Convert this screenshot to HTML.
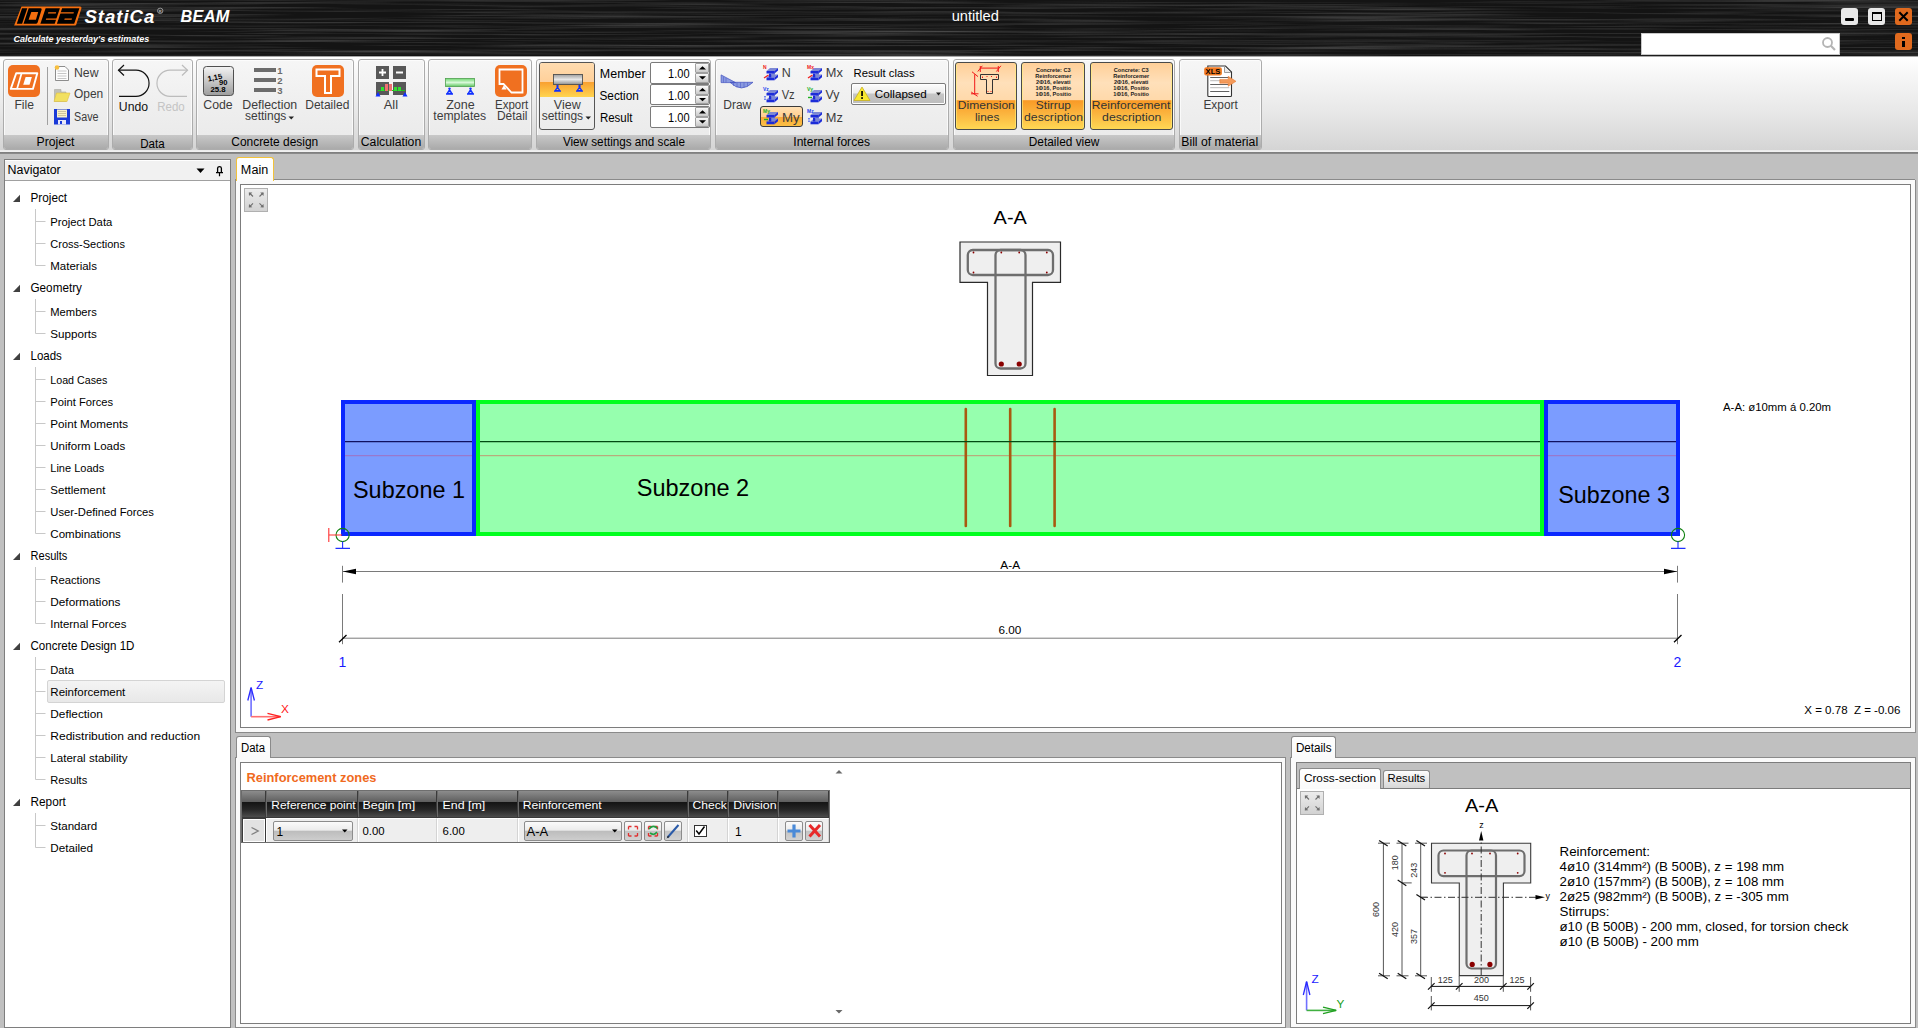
<!DOCTYPE html>
<html><head><meta charset="utf-8">
<style>
*{box-sizing:border-box;margin:0;padding:0}
html,body{width:1918px;height:1028px;overflow:hidden;background:#c0c0c0;font-family:"Liberation Sans",sans-serif;color:#000;position:relative}
.a{position:absolute}
svg{position:absolute;left:0;top:0;overflow:visible}
svg text{font-family:"Liberation Sans",sans-serif}
</style></head><body>
<div class="a" style="left:0px;top:0px;width:1918px;height:56px;background:#161616"></div>
<svg width="1918" height="56" style="position:absolute;left:0;top:0"><defs><filter id="brush" x="0" y="0" width="100%" height="100%"><feTurbulence type="fractalNoise" baseFrequency="0.004 0.42" numOctaves="3" seed="7"/><feColorMatrix type="matrix" values="0 0 0 0 1  0 0 0 0 1  0 0 0 0 1  0.9 0 0 0 -0.38"/></filter></defs><rect width="1918" height="56" fill="#141414"/><rect width="1918" height="56" filter="url(#brush)" opacity="0.5"/></svg>
<div class="a" style="left:1841px;top:8px;width:17px;height:17px;background:#e8e8e8;border-radius:3px"></div>
<div class="a" style="left:1845px;top:18px;width:9px;height:3px;background:#000;border-radius:1px"></div>
<div class="a" style="left:1868px;top:8px;width:17px;height:17px;background:#e8e8e8;border-radius:3px"></div>
<div class="a" style="left:1872px;top:12px;width:9.5px;height:9px;border:1.6px solid #000;border-top-width:2.6px"></div>
<div class="a" style="left:1895px;top:8px;width:17px;height:17px;background:#e06a1e;border-radius:3px"></div>
<div class="a" style="left:1641px;top:33px;width:199px;height:22px;background:#fff;border:1px solid #c8c8c8"></div>
<div class="a" style="left:1895px;top:33px;width:17px;height:17px;background:#e06a1e;border-radius:3px"></div>
<div class="a" style="left:1902px;top:37px;width:3px;height:2px;background:#000"></div>
<div class="a" style="left:1902px;top:40.5px;width:3px;height:6px;background:#000"></div>
<div class="a" style="left:0px;top:56px;width:1918px;height:97.5px;background:linear-gradient(180deg,#a8a8a8 0px,#a8a8a8 1px,#ffffff 1px,#f8f8f8 15px,#e6e6e6 60px,#d4d4d4 94.5px,#ececec 94.5px,#f2f2f2 96px,#7a7a7a 96px,#8a8a8a 97.5px)"></div>
<div class="a" style="left:2.5px;top:59px;width:106.0px;height:91px;border:1px solid #acacac;border-radius:3px;background:linear-gradient(180deg,#f6f6f6 0%,#f0f0f0 40%,#e9e9e9 100%);box-shadow:inset 0 0 0 1px rgba(255,255,255,.7)"></div>
<div class="a" style="left:3.5px;top:135px;width:104.0px;height:14px;background:linear-gradient(180deg,#c8c8c8,#aaaaaa);border-radius:0 0 2px 2px"></div>
<div class="a" style="left:112px;top:59px;width:81px;height:91px;border:1px solid #acacac;border-radius:3px;background:linear-gradient(180deg,#f6f6f6 0%,#f0f0f0 40%,#e9e9e9 100%);box-shadow:inset 0 0 0 1px rgba(255,255,255,.7)"></div>
<div class="a" style="left:113px;top:135px;width:79px;height:14px;background:linear-gradient(180deg,#c8c8c8,#aaaaaa);border-radius:0 0 2px 2px"></div>
<div class="a" style="left:196px;top:59px;width:157.5px;height:91px;border:1px solid #acacac;border-radius:3px;background:linear-gradient(180deg,#f6f6f6 0%,#f0f0f0 40%,#e9e9e9 100%);box-shadow:inset 0 0 0 1px rgba(255,255,255,.7)"></div>
<div class="a" style="left:197px;top:135px;width:155.5px;height:14px;background:linear-gradient(180deg,#c8c8c8,#aaaaaa);border-radius:0 0 2px 2px"></div>
<div class="a" style="left:357.5px;top:59px;width:67.0px;height:91px;border:1px solid #acacac;border-radius:3px;background:linear-gradient(180deg,#f6f6f6 0%,#f0f0f0 40%,#e9e9e9 100%);box-shadow:inset 0 0 0 1px rgba(255,255,255,.7)"></div>
<div class="a" style="left:358.5px;top:135px;width:65.0px;height:14px;background:linear-gradient(180deg,#c8c8c8,#aaaaaa);border-radius:0 0 2px 2px"></div>
<div class="a" style="left:428px;top:59px;width:104px;height:91px;border:1px solid #acacac;border-radius:3px;background:linear-gradient(180deg,#f6f6f6 0%,#f0f0f0 40%,#e9e9e9 100%);box-shadow:inset 0 0 0 1px rgba(255,255,255,.7)"></div>
<div class="a" style="left:429px;top:135px;width:102px;height:14px;background:linear-gradient(180deg,#c8c8c8,#aaaaaa);border-radius:0 0 2px 2px"></div>
<div class="a" style="left:536px;top:59px;width:175px;height:91px;border:1px solid #acacac;border-radius:3px;background:linear-gradient(180deg,#f6f6f6 0%,#f0f0f0 40%,#e9e9e9 100%);box-shadow:inset 0 0 0 1px rgba(255,255,255,.7)"></div>
<div class="a" style="left:537px;top:135px;width:173px;height:14px;background:linear-gradient(180deg,#c8c8c8,#aaaaaa);border-radius:0 0 2px 2px"></div>
<div class="a" style="left:715px;top:59px;width:233.5px;height:91px;border:1px solid #acacac;border-radius:3px;background:linear-gradient(180deg,#f6f6f6 0%,#f0f0f0 40%,#e9e9e9 100%);box-shadow:inset 0 0 0 1px rgba(255,255,255,.7)"></div>
<div class="a" style="left:716px;top:135px;width:231.5px;height:14px;background:linear-gradient(180deg,#c8c8c8,#aaaaaa);border-radius:0 0 2px 2px"></div>
<div class="a" style="left:952.5px;top:59px;width:222.5px;height:91px;border:1px solid #acacac;border-radius:3px;background:linear-gradient(180deg,#f6f6f6 0%,#f0f0f0 40%,#e9e9e9 100%);box-shadow:inset 0 0 0 1px rgba(255,255,255,.7)"></div>
<div class="a" style="left:953.5px;top:135px;width:220.5px;height:14px;background:linear-gradient(180deg,#c8c8c8,#aaaaaa);border-radius:0 0 2px 2px"></div>
<div class="a" style="left:1178.5px;top:59px;width:83.5px;height:91px;border:1px solid #acacac;border-radius:3px;background:linear-gradient(180deg,#f6f6f6 0%,#f0f0f0 40%,#e9e9e9 100%);box-shadow:inset 0 0 0 1px rgba(255,255,255,.7)"></div>
<div class="a" style="left:1179.5px;top:135px;width:81.5px;height:14px;background:linear-gradient(180deg,#c8c8c8,#aaaaaa);border-radius:0 0 2px 2px"></div>
<div class="a" style="left:47px;top:67px;width:1px;height:58px;background:#a0a0a0"></div>
<div class="a" style="left:539px;top:62.3px;width:56px;height:68px;border:1px solid #555;border-radius:3px;background:linear-gradient(180deg,#f4f4f4,#ececec)"></div>
<div class="a" style="left:540px;top:63.3px;width:54px;height:34px;background:linear-gradient(180deg,#ffdcb0 0%,#ffd09a 55%,#f9a030 56%,#ffd450 100%);border-radius:2px 2px 0 0"></div>
<div class="a" style="left:650.3px;top:62.4px;width:59.5px;height:21.2px;background:#fff;border:1px solid #7a7a7a;border-radius:2px"></div>
<div class="a" style="left:695.3px;top:63.4px;width:13.5px;height:9.6px;background:linear-gradient(180deg,#fafafa,#c8c8c8);border:1px solid #a0a0a0;border-radius:1px"></div>
<div class="a" style="left:695.3px;top:73.0px;width:13.5px;height:9.6px;background:linear-gradient(180deg,#fafafa,#c8c8c8);border:1px solid #a0a0a0;border-radius:1px"></div>
<div class="a" style="left:650.3px;top:84.2px;width:59.5px;height:21.2px;background:#fff;border:1px solid #7a7a7a;border-radius:2px"></div>
<div class="a" style="left:695.3px;top:85.2px;width:13.5px;height:9.6px;background:linear-gradient(180deg,#fafafa,#c8c8c8);border:1px solid #a0a0a0;border-radius:1px"></div>
<div class="a" style="left:695.3px;top:94.8px;width:13.5px;height:9.6px;background:linear-gradient(180deg,#fafafa,#c8c8c8);border:1px solid #a0a0a0;border-radius:1px"></div>
<div class="a" style="left:650.3px;top:106.4px;width:59.5px;height:21.2px;background:#fff;border:1px solid #7a7a7a;border-radius:2px"></div>
<div class="a" style="left:695.3px;top:107.4px;width:13.5px;height:9.6px;background:linear-gradient(180deg,#fafafa,#c8c8c8);border:1px solid #a0a0a0;border-radius:1px"></div>
<div class="a" style="left:695.3px;top:117.0px;width:13.5px;height:9.6px;background:linear-gradient(180deg,#fafafa,#c8c8c8);border:1px solid #a0a0a0;border-radius:1px"></div>
<div class="a" style="left:759.5px;top:106.2px;width:43px;height:21.3px;border:1px solid #3a3a3a;border-radius:3px;background:linear-gradient(180deg,#ffe0b4 0%,#ffcf90 50%,#f9a838 51%,#fbc045 100%)"></div>
<div class="a" style="left:850.5px;top:83px;width:95px;height:21.6px;border:1px solid #7a7a7a;border-radius:2px;box-shadow:inset 0 0 0 1px #fff;background:linear-gradient(180deg,#fdfdfd 0%,#ececec 45%,#c6c6c6 50%,#bcbcbc 100%)"></div>
<div class="a" style="left:955.2px;top:62.3px;width:62.299999999999955px;height:68px;border:1px solid #4a4a4a;border-radius:3px;box-shadow:inset 1px 0 0 rgba(255,240,120,.6),inset -1px 0 0 rgba(255,240,120,.6);background:linear-gradient(180deg,#ffcf98 0%,#ffe0ba 30%,#ffd9aa 56%,#f99a26 57%,#fbb640 78%,#ffd854 100%)"></div>
<div class="a" style="left:1021.3px;top:62.3px;width:64.0px;height:68px;border:1px solid #4a4a4a;border-radius:3px;box-shadow:inset 1px 0 0 rgba(255,240,120,.6),inset -1px 0 0 rgba(255,240,120,.6);background:linear-gradient(180deg,#ffcf98 0%,#ffe0ba 30%,#ffd9aa 56%,#f99a26 57%,#fbb640 78%,#ffd854 100%)"></div>
<div class="a" style="left:1089.5px;top:62.3px;width:83.29999999999995px;height:68px;border:1px solid #4a4a4a;border-radius:3px;box-shadow:inset 1px 0 0 rgba(255,240,120,.6),inset -1px 0 0 rgba(255,240,120,.6);background:linear-gradient(180deg,#ffcf98 0%,#ffe0ba 30%,#ffd9aa 56%,#f99a26 57%,#fbb640 78%,#ffd854 100%)"></div>
<div class="a" style="left:4px;top:159px;width:227px;height:869px;background:#fff;border:1px solid #7e7e7e"></div>
<div class="a" style="left:5px;top:160px;width:225px;height:20.5px;background:#f1f1f1;border-bottom:1px solid #a0a0a0;box-shadow:inset 0 1px 0 #fff"></div>
<div class="a" style="left:46.5px;top:679.5px;width:178.5px;height:23px;background:linear-gradient(180deg,#f4f4f4,#e8e8e8);border:1px solid #d4d4d4;border-radius:2px"></div>
<div class="a" style="left:235px;top:179px;width:1680px;height:1px;background:#8a8a8a"></div>
<div class="a" style="left:235px;top:180px;width:1681px;height:553px;background:#fafafa;border:1px solid #8a8a8a;border-top:none"></div>
<div class="a" style="left:235.5px;top:157px;width:38.5px;height:23.5px;background:linear-gradient(180deg,#ffffff,#fbfbfb);border:1px solid #f2c23a;border-bottom:none;border-radius:3px 3px 0 0"></div>
<div class="a" style="left:240px;top:184px;width:1671px;height:544px;background:#fff;border:1px solid #7c7c7c"></div>
<div class="a" style="left:244px;top:188px;width:24px;height:24px;background:linear-gradient(180deg,#ececec,#d2d2d2);border:1px solid #b0b0b0"></div>
<div class="a" style="left:235px;top:757px;width:1051px;height:271px;background:#fafafa;border:1px solid #8a8a8a;border-top:none"></div>
<div class="a" style="left:235px;top:757px;width:1051px;height:1px;background:#8a8a8a"></div>
<div class="a" style="left:236px;top:735.8px;width:34.5px;height:22.5px;background:linear-gradient(180deg,#ffffff,#fafafa);border:1px solid #8a8a8a;border-bottom:none;border-radius:3px 3px 0 0"></div>
<div class="a" style="left:240px;top:762px;width:1041.5px;height:261.5px;background:#fff;border:1px solid #7c7c7c"></div>
<div class="a" style="left:241px;top:790px;width:588.5px;height:53px;background:#3a3a3a;border:1px solid #6e6e6e"></div>
<div class="a" style="left:241px;top:791px;width:25px;height:26px;background:linear-gradient(180deg,#8c8c8c 0%,#5e5e5e 42%,#141414 43%,#252525 70%,#4c4c4c 100%);border-left:1px solid #6a6a6a;border-right:1px solid #3a3a3a"></div>
<div class="a" style="left:266px;top:791px;width:92px;height:26px;background:linear-gradient(180deg,#8c8c8c 0%,#5e5e5e 42%,#141414 43%,#252525 70%,#4c4c4c 100%);border-left:1px solid #6a6a6a;border-right:1px solid #3a3a3a"></div>
<div class="a" style="left:358px;top:791px;width:79px;height:26px;background:linear-gradient(180deg,#8c8c8c 0%,#5e5e5e 42%,#141414 43%,#252525 70%,#4c4c4c 100%);border-left:1px solid #6a6a6a;border-right:1px solid #3a3a3a"></div>
<div class="a" style="left:437px;top:791px;width:81px;height:26px;background:linear-gradient(180deg,#8c8c8c 0%,#5e5e5e 42%,#141414 43%,#252525 70%,#4c4c4c 100%);border-left:1px solid #6a6a6a;border-right:1px solid #3a3a3a"></div>
<div class="a" style="left:518px;top:791px;width:170px;height:26px;background:linear-gradient(180deg,#8c8c8c 0%,#5e5e5e 42%,#141414 43%,#252525 70%,#4c4c4c 100%);border-left:1px solid #6a6a6a;border-right:1px solid #3a3a3a"></div>
<div class="a" style="left:688px;top:791px;width:40px;height:26px;background:linear-gradient(180deg,#8c8c8c 0%,#5e5e5e 42%,#141414 43%,#252525 70%,#4c4c4c 100%);border-left:1px solid #6a6a6a;border-right:1px solid #3a3a3a"></div>
<div class="a" style="left:728px;top:791px;width:50px;height:26px;background:linear-gradient(180deg,#8c8c8c 0%,#5e5e5e 42%,#141414 43%,#252525 70%,#4c4c4c 100%);border-left:1px solid #6a6a6a;border-right:1px solid #3a3a3a"></div>
<div class="a" style="left:778px;top:791px;width:51px;height:26px;background:linear-gradient(180deg,#8c8c8c 0%,#5e5e5e 42%,#141414 43%,#252525 70%,#4c4c4c 100%);border-left:1px solid #6a6a6a;border-right:1px solid #3a3a3a"></div>
<div class="a" style="left:242px;top:817px;width:586px;height:1px;background:#3a3a3a"></div>
<div class="a" style="left:243px;top:818.5px;width:22px;height:23px;background:#e2e2e2;border:1px solid #fff"></div>
<div class="a" style="left:266px;top:818px;width:92px;height:24px;background:#eeeeee;border-left:1px solid #fff;border-right:1px solid #d4d4d4;border-top:1px solid #fff"></div>
<div class="a" style="left:358px;top:818px;width:79px;height:24px;background:#eeeeee;border-left:1px solid #fff;border-right:1px solid #d4d4d4;border-top:1px solid #fff"></div>
<div class="a" style="left:437px;top:818px;width:81px;height:24px;background:#eeeeee;border-left:1px solid #fff;border-right:1px solid #d4d4d4;border-top:1px solid #fff"></div>
<div class="a" style="left:518px;top:818px;width:170px;height:24px;background:#eeeeee;border-left:1px solid #fff;border-right:1px solid #d4d4d4;border-top:1px solid #fff"></div>
<div class="a" style="left:688px;top:818px;width:40px;height:24px;background:#eeeeee;border-left:1px solid #fff;border-right:1px solid #d4d4d4;border-top:1px solid #fff"></div>
<div class="a" style="left:728px;top:818px;width:50px;height:24px;background:#eeeeee;border-left:1px solid #fff;border-right:1px solid #d4d4d4;border-top:1px solid #fff"></div>
<div class="a" style="left:778px;top:818px;width:51px;height:24px;background:#eeeeee;border-left:1px solid #fff;border-right:1px solid #d4d4d4;border-top:1px solid #fff"></div>
<div class="a" style="left:272.5px;top:820.5px;width:80px;height:20.5px;background:linear-gradient(180deg,#fbfbfb 0%,#ececec 45%,#bdbdbd 52%,#cdcdcd 100%);border:1px solid #8c8c8c;border-radius:2px"></div>
<div class="a" style="left:523.8px;top:820.8px;width:98.5px;height:20.2px;background:linear-gradient(180deg,#fbfbfb 0%,#ececec 45%,#bdbdbd 52%,#cdcdcd 100%);border:1px solid #8c8c8c;border-radius:2px"></div>
<div class="a" style="left:624px;top:820.8px;width:18.4px;height:20.2px;background:linear-gradient(180deg,#fbfbfb 0%,#ececec 45%,#c4c4c4 52%,#d2d2d2 100%);border:1px solid #8c8c8c;border-radius:2px"></div>
<div class="a" style="left:644px;top:820.8px;width:18.4px;height:20.2px;background:linear-gradient(180deg,#fbfbfb 0%,#ececec 45%,#c4c4c4 52%,#d2d2d2 100%);border:1px solid #8c8c8c;border-radius:2px"></div>
<div class="a" style="left:663.6px;top:820.8px;width:18.4px;height:20.2px;background:linear-gradient(180deg,#fbfbfb 0%,#ececec 45%,#c4c4c4 52%,#d2d2d2 100%);border:1px solid #8c8c8c;border-radius:2px"></div>
<div class="a" style="left:784.8px;top:820.8px;width:18.4px;height:20.2px;background:linear-gradient(180deg,#fbfbfb 0%,#ececec 45%,#c4c4c4 52%,#d2d2d2 100%);border:1px solid #8c8c8c;border-radius:2px"></div>
<div class="a" style="left:805px;top:820.8px;width:18.4px;height:20.2px;background:linear-gradient(180deg,#fbfbfb 0%,#ececec 45%,#c4c4c4 52%,#d2d2d2 100%);border:1px solid #8c8c8c;border-radius:2px"></div>
<div class="a" style="left:694px;top:824.6px;width:12.5px;height:12px;background:#fff;border:1px solid #333"></div>
<div class="a" style="left:1290px;top:757px;width:626px;height:271px;background:#fafafa;border:1px solid #8a8a8a;border-top:none"></div>
<div class="a" style="left:1290px;top:757px;width:626px;height:1px;background:#8a8a8a"></div>
<div class="a" style="left:1290.7px;top:735.8px;width:45.6px;height:22.5px;background:linear-gradient(180deg,#ffffff,#fafafa);border:1px solid #8a8a8a;border-bottom:none;border-radius:3px 3px 0 0"></div>
<div class="a" style="left:1295.5px;top:762px;width:615.5px;height:261.5px;background:#c0c0c0;border:1px solid #7c7c7c"></div>
<div class="a" style="left:1296.5px;top:787.5px;width:613.5px;height:235px;background:#fff;border-top:1px solid #7c7c7c"></div>
<div class="a" style="left:1298.7px;top:767.5px;width:82.6px;height:21px;background:linear-gradient(180deg,#ffffff,#fafafa);border:1px solid #8a8a8a;border-bottom:none;border-radius:3px 3px 0 0"></div>
<div class="a" style="left:1383px;top:769.8px;width:47px;height:17.8px;background:linear-gradient(180deg,#fdfdfd,#d6d6d6);border:1px solid #8a8a8a;border-bottom:none;border-radius:3px 3px 0 0"></div>
<div class="a" style="left:1300px;top:791.2px;width:24px;height:23.5px;background:linear-gradient(180deg,#ececec,#d2d2d2);border:1px solid #b0b0b0"></div>
<svg width="1918" height="1028" viewBox="0 0 1918 1028">
<path d="M21.5 6.5 H80 Q82 6.5 81.4 8.4 L76.3 24.6 Q76 25.6 75 25.6 H14.1 Z" fill="#f56f0f"/>
<path d="M22 8.3 H27.3 L22.1 23.8 H16.8 Z" fill="#000"/>
<path d="M28.7 8.3 H40.6 Q42.1 8.3 41.6 9.8 L37.6 22.4 Q37.2 23.8 35.8 23.8 H23.5 Z" fill="#000"/>
<path d="M45.6 8.3 H59.9 L54.7 23.8 H40.4 Z" fill="#000"/>
<path d="M62.1 8.3 H79.4 L74.2 23.8 H56.9 Z" fill="#000"/>
<path d="M31.3 12.1 H38.2 L35.9 19.8 H28.6 Z" fill="#f56f0f"/>
<path d="M48.3 12.3 H56.2 L55.8 13.6 H47.9 Z M46.2 18.5 H58.5 L58.1 19.8 H45.8 Z" fill="#f56f0f"/>
<path d="M60 12.3 H73.9 L73.5 13.6 H59.6 Z M64.7 18.5 H72 L71.6 19.8 H64.3 Z" fill="#f56f0f"/>
<text x="84.5" y="22.5" font-size="18.6" fill="#fff" font-weight="bold" font-style="italic" letter-spacing="0.95">StatiCa</text>
<circle cx="160.2" cy="10.8" r="2.7" fill="none" stroke="#b0b0b0" stroke-width="0.8"/>
<text x="160.2" y="12.6" font-size="4" fill="#b0b0b0" text-anchor="middle" font-weight="bold">R</text>
<text x="180.5" y="22" font-size="16.3" fill="#fff" font-weight="bold" font-style="italic" letter-spacing="0.3">BEAM</text>
<text x="13.5" y="41.5" font-size="9" fill="#fff" font-weight="bold" font-style="italic">Calculate yesterday's estimates</text>
<text x="951.66" y="21.0" font-size="14" fill="#fff" textLength="47.18" lengthAdjust="spacingAndGlyphs">untitled</text>
<path d="M1899.3 12.3 L1907.7 20.7 M1907.7 12.3 L1899.3 20.7" stroke="#000" stroke-width="2"/>
<circle cx="1827.5" cy="42.5" r="4.5" fill="none" stroke="#b4b4b4" stroke-width="1.8"/><path d="M1830.8 45.8 L1835 50" stroke="#b4b4b4" stroke-width="2.2"/>
<text x="55.55" y="146.0" font-size="12" fill="#000" text-anchor="middle" textLength="37.94" lengthAdjust="spacingAndGlyphs">Project</text>
<text x="152.50" y="147.5" font-size="12" fill="#000" text-anchor="middle" textLength="24.44" lengthAdjust="spacingAndGlyphs">Data</text>
<text x="274.75" y="146.0" font-size="12" fill="#000" text-anchor="middle" textLength="86.94" lengthAdjust="spacingAndGlyphs">Concrete design</text>
<text x="391.00" y="146.0" font-size="12" fill="#000" text-anchor="middle" textLength="60.44" lengthAdjust="spacingAndGlyphs">Calculation</text>
<text x="623.90" y="146.0" font-size="12" fill="#000" text-anchor="middle" textLength="122.04" lengthAdjust="spacingAndGlyphs">View settings and scale</text>
<text x="831.65" y="146.0" font-size="12" fill="#000" text-anchor="middle" textLength="76.74" lengthAdjust="spacingAndGlyphs">Internal forces</text>
<text x="1064.10" y="146.0" font-size="12" fill="#000" text-anchor="middle" textLength="70.64" lengthAdjust="spacingAndGlyphs">Detailed view</text>
<text x="1219.70" y="146.0" font-size="12" fill="#000" text-anchor="middle" textLength="76.84" lengthAdjust="spacingAndGlyphs">Bill of material</text>
<rect x="8" y="65" width="32" height="32" rx="5" fill="#f07020"/>
<path d="M16.2 73.2 H37.3 L32.9 88.9 H10.8 Z" fill="none" stroke="#fff" stroke-width="1.9" stroke-linejoin="round"/><path d="M21.6 73.2 L17 88.9" stroke="#fff" stroke-width="1.7"/><path d="M25.6 77 H31.9 L29.5 84.7 H23.2 Z" fill="#fff"/>
<text x="24.25" y="108.6" font-size="12" fill="#3c3c3c" text-anchor="middle" textLength="19.54" lengthAdjust="spacingAndGlyphs">File</text>
<path d="M55.5 66.5 L65 66.5 L68.5 70 L68.5 80.5 L55.5 80.5 Z" fill="#fdfdfd" stroke="#808080" stroke-width="0.9"/><path d="M57.5 71 H66.5 M57.5 73.5 H66.5 M57.5 76 H66.5 M57.5 78.5 H66.5" stroke="#b8b8b8" stroke-width="0.8"/><circle cx="57" cy="67.5" r="2.3" fill="#f8c040"/>
<text x="73.98" y="77.2" font-size="12" fill="#3c3c3c" textLength="24.54" lengthAdjust="spacingAndGlyphs">New</text>
<path d="M54.5 89.5 H61 V92 H66 V101.5 H54.5 Z" fill="#c0c0b8" stroke="#a8a8a0" stroke-width="0.6"/><path d="M56.5 93 H70 L67 101.5 H54 Z" fill="#f2e060" stroke="#e0c040" stroke-width="0.6"/>
<text x="73.98" y="98.4" font-size="12" fill="#3c3c3c" textLength="29.24" lengthAdjust="spacingAndGlyphs">Open</text>
<rect x="54" y="109" width="16" height="15.5" fill="#1a3ad8"/><rect x="57" y="109.5" width="10" height="8" fill="#f8f0c8"/><path d="M58 111.5 H66 M58 113.5 H66 M58 115.5 H66" stroke="#b0a880" stroke-width="0.6"/><rect x="58" y="120" width="8" height="4.5" fill="#e8e8f8"/><rect x="60" y="121" width="2" height="3" fill="#1a3ad8"/>
<text x="73.98" y="120.5" font-size="12" fill="#3c3c3c" textLength="24.54" lengthAdjust="spacingAndGlyphs">Save</text>
<path d="M118.5 70.2 H136 A13 13 0 0 1 136 96.3 H119" fill="none" stroke="#111" stroke-width="1.2"/><path d="M124 65 L118.5 70.2 L124 75.5" fill="none" stroke="#111" stroke-width="1.2"/>
<text x="133.50" y="110.6" font-size="12" fill="#111" text-anchor="middle" textLength="29.24" lengthAdjust="spacingAndGlyphs">Undo</text>
<path d="M187.5 70.2 H170 A13 13 0 0 0 170 96.3 H187" fill="none" stroke="#bcbcbc" stroke-width="1.2"/><path d="M182 65 L187.5 70.2 L182 75.5" fill="none" stroke="#bcbcbc" stroke-width="1.2"/>
<text x="171.00" y="110.6" font-size="12" fill="#c4c4c4" text-anchor="middle" textLength="27.44" lengthAdjust="spacingAndGlyphs">Redo</text>
<defs><linearGradient id="gcode" x1="0" y1="0" x2="0" y2="1"><stop offset="0" stop-color="#f4f4f4"/><stop offset="1" stop-color="#9c9c9c"/></linearGradient></defs>
<rect x="203.5" y="66.5" width="30" height="29" rx="3" fill="url(#gcode)" stroke="#505050" stroke-width="1"/>
<text x="207.5" y="80.5" font-size="7.6" font-weight="bold" fill="#000" transform="rotate(-12 213 78)">1,15</text>
<text x="219" y="84.5" font-size="7.6" fill="#000" font-weight="bold">90</text>
<text x="218" y="92" font-size="7.8" fill="#000" text-anchor="middle" font-weight="bold">25.8</text>
<text x="218.00" y="109.0" font-size="12" fill="#3c3c3c" text-anchor="middle" textLength="29.44" lengthAdjust="spacingAndGlyphs">Code</text>
<rect x="254" y="68" width="22" height="4" fill="#6c6c6c"/><rect x="254" y="78" width="22" height="4" fill="#6c6c6c"/><rect x="254" y="88" width="22" height="4" fill="#6c6c6c"/>
<text x="280" y="73.6" font-size="9.5" fill="#6c6c6c" text-anchor="middle" font-weight="bold">1</text>
<text x="280" y="83.7" font-size="9.5" fill="#6c6c6c" text-anchor="middle" font-weight="bold">2</text>
<text x="280" y="93.8" font-size="9.5" fill="#6c6c6c" text-anchor="middle" font-weight="bold">3</text>
<text x="269.75" y="109.0" font-size="12" fill="#3c3c3c" text-anchor="middle" textLength="54.94" lengthAdjust="spacingAndGlyphs">Deflection</text>
<text x="265.65" y="120.3" font-size="12" fill="#3c3c3c" text-anchor="middle" textLength="41.34" lengthAdjust="spacingAndGlyphs">settings</text>
<path d="M288.5 116.5 H294 L291.25 119.5 Z" fill="#222"/>
<rect x="312" y="65" width="32" height="32" rx="5" fill="#f07020"/><path d="M316.5 69.5 H339.5 V76 H331 V93 H325 V76 H316.5 Z" fill="none" stroke="#fff" stroke-width="2"/>
<text x="327.30" y="109.0" font-size="12" fill="#3c3c3c" text-anchor="middle" textLength="44.04" lengthAdjust="spacingAndGlyphs">Detailed</text>
<rect x="376" y="66" width="13" height="13" fill="#585858"/><rect x="393" y="66" width="13" height="13" fill="#585858"/><rect x="376" y="82" width="13" height="13" fill="#585858"/><rect x="393" y="82" width="13" height="13" fill="#585858"/>
<path d="M379 72.5 H386 M382.5 69 V76 M396 72.5 H403" stroke="#fff" stroke-width="1.8"/>
<path d="M378 90.5 H405" stroke="#20c020" stroke-width="1"/><rect x="381" y="87" width="3" height="4" fill="#30e030"/><rect x="385" y="84" width="3" height="7" fill="#f07070"/><rect x="389" y="84" width="3" height="7" fill="#f07070"/><rect x="394" y="87" width="3" height="4" fill="#30e030"/><rect x="398" y="87" width="3" height="4" fill="#30e030"/>
<path d="M375.5 96.5 L378 92 L380.5 96.5 Z M402.5 96.5 L405 92 L407.5 96.5 Z" fill="#1030ff"/>
<text x="390.95" y="109.0" font-size="12" fill="#3c3c3c" text-anchor="middle" textLength="14.34" lengthAdjust="spacingAndGlyphs">All</text>
<defs><linearGradient id="gzone" x1="0" y1="0" x2="0" y2="1"><stop offset="0" stop-color="#70d870"/><stop offset=".5" stop-color="#d8f8d8"/><stop offset="1" stop-color="#60c860"/></linearGradient></defs>
<rect x="445.5" y="78.5" width="29" height="8" fill="url(#gzone)" stroke="#50a050" stroke-width="0.8"/>
<path d="M447.2 93.3 L449.5 89.8 L451.8 93.3 Z M468.2 93.3 L470.5 89.8 L472.8 93.3 Z M446 94 H453 M467 94 H474" fill="none" stroke="#1030ff" stroke-width="1.3"/><circle cx="449.5" cy="88.6" r="1.2" fill="#1030ff"/><circle cx="470.5" cy="88.6" r="1.2" fill="#1030ff"/>
<text x="460.45" y="108.6" font-size="12" fill="#3c3c3c" text-anchor="middle" textLength="28.54" lengthAdjust="spacingAndGlyphs">Zone</text>
<text x="459.75" y="120.2" font-size="12" fill="#3c3c3c" text-anchor="middle" textLength="52.94" lengthAdjust="spacingAndGlyphs">templates</text>
<rect x="495" y="65" width="32" height="32" rx="5" fill="#f07020"/><path d="M499.5 69.5 H522.5 V92.5 H511.5 L503.5 84 H499.5 Z" fill="none" stroke="#fff" stroke-width="1.8"/><path d="M501.5 89.5 L504 85 L506.5 89.5 Z" fill="#fff"/>
<text x="511.60" y="108.6" font-size="12" fill="#3c3c3c" text-anchor="middle" textLength="33.24" lengthAdjust="spacingAndGlyphs">Export</text>
<text x="512.25" y="120.2" font-size="12" fill="#3c3c3c" text-anchor="middle" textLength="30.54" lengthAdjust="spacingAndGlyphs">Detail</text>
<defs><linearGradient id="gbar" x1="0" y1="0" x2="0" y2="1"><stop offset="0" stop-color="#a0a0a0"/><stop offset=".5" stop-color="#e8e8e8"/><stop offset="1" stop-color="#909090"/></linearGradient></defs>
<rect x="553.5" y="74.5" width="29" height="10" fill="url(#gbar)" stroke="#505050" stroke-width="0.9"/>
<path d="M555.2 90.6 L557.5 87.2 L559.8 90.6 Z M577.2 90.6 L579.5 87.2 L581.8 90.6 Z M554 91.2 H561 M576 91.2 H583" fill="none" stroke="#1030ff" stroke-width="1.3"/><circle cx="557.5" cy="86" r="1.2" fill="#1030ff"/><circle cx="579.5" cy="86" r="1.2" fill="#1030ff"/>
<text x="567.30" y="108.6" font-size="12" fill="#3c3c3c" text-anchor="middle" textLength="26.84" lengthAdjust="spacingAndGlyphs">View</text>
<text x="562.40" y="120.3" font-size="12" fill="#3c3c3c" text-anchor="middle" textLength="41.44" lengthAdjust="spacingAndGlyphs">settings</text>
<path d="M585.5 116.5 H591 L588.25 119.5 Z" fill="#222"/>
<text x="599.88" y="78.0" font-size="12" fill="#000" textLength="45.74" lengthAdjust="spacingAndGlyphs">Member</text>
<text x="689.52" y="78.0" font-size="12" fill="#000" text-anchor="end" textLength="21.44" lengthAdjust="spacingAndGlyphs">1.00</text>
<text x="599.48" y="100.0" font-size="12" fill="#000" textLength="39.34" lengthAdjust="spacingAndGlyphs">Section</text>
<text x="689.52" y="100.0" font-size="12" fill="#000" text-anchor="end" textLength="21.44" lengthAdjust="spacingAndGlyphs">1.00</text>
<text x="599.88" y="122.0" font-size="12" fill="#000" textLength="32.54" lengthAdjust="spacingAndGlyphs">Result</text>
<text x="689.52" y="122.0" font-size="12" fill="#000" text-anchor="end" textLength="21.44" lengthAdjust="spacingAndGlyphs">1.00</text>
<path d="M699 69.4 L702.5 66.2 L706 69.4 Z M699 76.2 L702.5 79.4 L706 76.2 Z" fill="#000"/>
<path d="M699 91.2 L702.5 88.0 L706 91.2 Z M699 98.0 L702.5 101.2 L706 98.0 Z" fill="#000"/>
<path d="M699 113.4 L702.5 110.2 L706 113.4 Z M699 120.2 L702.5 123.4 L706 120.2 Z" fill="#000"/>
<path d="M721.1 74.9 L735.6 82.6 H721.1 Z M730 82.3 H753 Q741.5 93.6 730 82.3 Z" fill="#8a9ae0" stroke="#4050c0" stroke-width="0.7"/>
<path d="M723.5 76.5 V82.6 M726 78 V82.6 M733.5 82.4 V86 M737 82.4 V87.4 M740.5 82.4 V87.9 M744 82.4 V87.6 M747.5 82.4 V86.4" stroke="#5060c8" stroke-width="0.6"/>
<text x="737.30" y="109.0" font-size="12" fill="#3c3c3c" text-anchor="middle" textLength="28.04" lengthAdjust="spacingAndGlyphs">Draw</text>
<path d="M766.50 77.50 L770.00 74.50 L778.00 74.50 L774.50 77.50 Z" fill="#7d88d4"/><path d="M766.50 77.50 L774.50 77.50 L774.50 80.30 L766.50 80.30 Z" fill="#1c2cd8"/><path d="M774.50 77.50 L778.00 74.50 L778.00 77.20 L774.50 80.30 Z" fill="#1c2cd8"/><path d="M769.00 73.50 L771.50 73.50 L771.50 77.50 L769.00 77.50 Z" fill="#1c2cd8"/><path d="M771.50 73.50 L775.00 70.50 L775.00 74.50 L771.50 77.50 Z" fill="#7d88d4"/><path d="M766.50 71.00 L770.00 68.00 L778.00 68.00 L774.50 71.00 Z" fill="#7d88d4"/><path d="M766.50 71.00 L774.50 71.00 L774.50 73.50 L766.50 73.50 Z" fill="#1c2cd8"/><path d="M774.50 71.00 L778.00 68.00 L778.00 70.50 L774.50 73.50 Z" fill="#1c2cd8"/><text x="763" y="69.2" font-size="5" font-weight="bold" fill="#f02020">N</text><path d="M764 78 L768.5 75" stroke="#f02020" stroke-width="1.4"/>
<text x="781.68" y="77.2" font-size="12" fill="#3c3c3c" textLength="9.04" lengthAdjust="spacingAndGlyphs">N</text>
<path d="M766.50 99.50 L770.00 96.50 L778.00 96.50 L774.50 99.50 Z" fill="#7d88d4"/><path d="M766.50 99.50 L774.50 99.50 L774.50 102.30 L766.50 102.30 Z" fill="#1c2cd8"/><path d="M774.50 99.50 L778.00 96.50 L778.00 99.20 L774.50 102.30 Z" fill="#1c2cd8"/><path d="M769.00 95.50 L771.50 95.50 L771.50 99.50 L769.00 99.50 Z" fill="#1c2cd8"/><path d="M771.50 95.50 L775.00 92.50 L775.00 96.50 L771.50 99.50 Z" fill="#7d88d4"/><path d="M766.50 93.00 L770.00 90.00 L778.00 90.00 L774.50 93.00 Z" fill="#7d88d4"/><path d="M766.50 93.00 L774.50 93.00 L774.50 95.50 L766.50 95.50 Z" fill="#1c2cd8"/><path d="M774.50 93.00 L778.00 90.00 L778.00 92.50 L774.50 95.50 Z" fill="#1c2cd8"/><text x="763" y="91.2" font-size="5" font-weight="bold" fill="#2040f0">Vz</text><path d="M765 96 V101" stroke="#2040f0" stroke-width="1.2" stroke-dasharray="1.5 1"/>
<text x="781.68" y="99.2" font-size="12" fill="#3c3c3c" textLength="13.04" lengthAdjust="spacingAndGlyphs">Vz</text>
<path d="M766.50 121.50 L770.00 118.50 L778.00 118.50 L774.50 121.50 Z" fill="#7d88d4"/><path d="M766.50 121.50 L774.50 121.50 L774.50 124.30 L766.50 124.30 Z" fill="#1c2cd8"/><path d="M774.50 121.50 L778.00 118.50 L778.00 121.20 L774.50 124.30 Z" fill="#1c2cd8"/><path d="M769.00 117.50 L771.50 117.50 L771.50 121.50 L769.00 121.50 Z" fill="#1c2cd8"/><path d="M771.50 117.50 L775.00 114.50 L775.00 118.50 L771.50 121.50 Z" fill="#7d88d4"/><path d="M766.50 115.00 L770.00 112.00 L778.00 112.00 L774.50 115.00 Z" fill="#7d88d4"/><path d="M766.50 115.00 L774.50 115.00 L774.50 117.50 L766.50 117.50 Z" fill="#1c2cd8"/><path d="M774.50 115.00 L778.00 112.00 L778.00 114.50 L774.50 117.50 Z" fill="#1c2cd8"/><text x="763" y="113.2" font-size="5" font-weight="bold" fill="#20b020">My</text><path d="M764 119.5 H768" stroke="#20b020" stroke-width="1.4"/>
<text x="782.08" y="121.5" font-size="12" fill="#3c3c3c" textLength="17.64" lengthAdjust="spacingAndGlyphs">My</text>
<path d="M810.50 77.50 L814.00 74.50 L822.00 74.50 L818.50 77.50 Z" fill="#7d88d4"/><path d="M810.50 77.50 L818.50 77.50 L818.50 80.30 L810.50 80.30 Z" fill="#1c2cd8"/><path d="M818.50 77.50 L822.00 74.50 L822.00 77.20 L818.50 80.30 Z" fill="#1c2cd8"/><path d="M813.00 73.50 L815.50 73.50 L815.50 77.50 L813.00 77.50 Z" fill="#1c2cd8"/><path d="M815.50 73.50 L819.00 70.50 L819.00 74.50 L815.50 77.50 Z" fill="#7d88d4"/><path d="M810.50 71.00 L814.00 68.00 L822.00 68.00 L818.50 71.00 Z" fill="#7d88d4"/><path d="M810.50 71.00 L818.50 71.00 L818.50 73.50 L810.50 73.50 Z" fill="#1c2cd8"/><path d="M818.50 71.00 L822.00 68.00 L822.00 70.50 L818.50 73.50 Z" fill="#1c2cd8"/><text x="807" y="69.2" font-size="5" font-weight="bold" fill="#f02020">Mx</text><path d="M808 78 L812.5 75" stroke="#f02020" stroke-width="1.4"/>
<text x="825.78" y="77.2" font-size="12" fill="#3c3c3c" textLength="17.04" lengthAdjust="spacingAndGlyphs">Mx</text>
<path d="M810.50 99.50 L814.00 96.50 L822.00 96.50 L818.50 99.50 Z" fill="#7d88d4"/><path d="M810.50 99.50 L818.50 99.50 L818.50 102.30 L810.50 102.30 Z" fill="#1c2cd8"/><path d="M818.50 99.50 L822.00 96.50 L822.00 99.20 L818.50 102.30 Z" fill="#1c2cd8"/><path d="M813.00 95.50 L815.50 95.50 L815.50 99.50 L813.00 99.50 Z" fill="#1c2cd8"/><path d="M815.50 95.50 L819.00 92.50 L819.00 96.50 L815.50 99.50 Z" fill="#7d88d4"/><path d="M810.50 93.00 L814.00 90.00 L822.00 90.00 L818.50 93.00 Z" fill="#7d88d4"/><path d="M810.50 93.00 L818.50 93.00 L818.50 95.50 L810.50 95.50 Z" fill="#1c2cd8"/><path d="M818.50 93.00 L822.00 90.00 L822.00 92.50 L818.50 95.50 Z" fill="#1c2cd8"/><text x="807" y="91.2" font-size="5" font-weight="bold" fill="#20b020">Vy</text><path d="M808 97.5 H812" stroke="#20b020" stroke-width="1.4"/>
<text x="825.48" y="99.2" font-size="12" fill="#3c3c3c" textLength="13.94" lengthAdjust="spacingAndGlyphs">Vy</text>
<path d="M810.50 121.50 L814.00 118.50 L822.00 118.50 L818.50 121.50 Z" fill="#7d88d4"/><path d="M810.50 121.50 L818.50 121.50 L818.50 124.30 L810.50 124.30 Z" fill="#1c2cd8"/><path d="M818.50 121.50 L822.00 118.50 L822.00 121.20 L818.50 124.30 Z" fill="#1c2cd8"/><path d="M813.00 117.50 L815.50 117.50 L815.50 121.50 L813.00 121.50 Z" fill="#1c2cd8"/><path d="M815.50 117.50 L819.00 114.50 L819.00 118.50 L815.50 121.50 Z" fill="#7d88d4"/><path d="M810.50 115.00 L814.00 112.00 L822.00 112.00 L818.50 115.00 Z" fill="#7d88d4"/><path d="M810.50 115.00 L818.50 115.00 L818.50 117.50 L810.50 117.50 Z" fill="#1c2cd8"/><path d="M818.50 115.00 L822.00 112.00 L822.00 114.50 L818.50 117.50 Z" fill="#1c2cd8"/><text x="807" y="113.2" font-size="5" font-weight="bold" fill="#2040f0">Mz</text><path d="M809 118 V123" stroke="#2040f0" stroke-width="1.2" stroke-dasharray="1.5 1"/>
<text x="825.78" y="121.5" font-size="12" fill="#3c3c3c" textLength="17.04" lengthAdjust="spacingAndGlyphs">Mz</text>
<text x="853.54" y="77.4" font-size="11" fill="#000" textLength="61.02" lengthAdjust="spacingAndGlyphs">Result class</text>
<path d="M862 87 L870 100.5 L854 100.5 Z" fill="#f8e830" stroke="#c8b020" stroke-width="0.8"/><rect x="861.2" y="91" width="1.7" height="5" fill="#000"/><rect x="861.2" y="97.2" width="1.7" height="1.7" fill="#000"/>
<text x="874.82" y="98.4" font-size="11.4" fill="#000" textLength="51.87" lengthAdjust="spacingAndGlyphs">Collapsed</text>
<path d="M936 92.5 H941 L938.5 95.5 Z" fill="#222"/>
<g fill="none" stroke="#f01818" stroke-width="1"><path d="M980 68.1 H998.6 M977.8 71.5 L982.3 65.8 M996.4 71.5 L1000.9 65.8 M980.3 66 V72 M998.3 66 V72 M974.7 74.3 V93.8 M972 71.8 L978 76.6 M971.2 92 L977.6 96.3 M971 93.8 H978.5"/></g>
<path d="M980.5 74.5 H998.5 V79.5 H992.5 V93.5 H986.5 V79.5 H980.5 Z" fill="none" stroke="#333" stroke-width="1"/>
<path d="M982.5 76.5 v1.5 M986.5 76.5 h1 M991 76.5 h1 M996.5 76.5 v1.5 M987.5 91.5 h1 M990.5 91.5 h1" stroke="#f01818" stroke-width="1"/>
<text x="986.35" y="109.0" font-size="11.8" fill="#333" text-anchor="middle" textLength="56.92" lengthAdjust="spacingAndGlyphs">Dimension</text>
<text x="987.15" y="120.5" font-size="11.8" fill="#333" text-anchor="middle" textLength="24.32" lengthAdjust="spacingAndGlyphs">lines</text>
<text x="1053.3" y="71.8" font-size="5.6" fill="#222" text-anchor="middle" font-weight="bold">Concrete: C3</text>
<text x="1053.3" y="77.95" font-size="5.6" fill="#222" text-anchor="middle" font-weight="bold">Reinforcemer</text>
<text x="1053.3" y="84.1" font-size="5.6" fill="#222" text-anchor="middle" font-weight="bold">2Φ16, elevati</text>
<text x="1053.3" y="90.25" font-size="5.6" fill="#222" text-anchor="middle" font-weight="bold">1Φ16, Positio</text>
<text x="1053.3" y="96.4" font-size="5.6" fill="#222" text-anchor="middle" font-weight="bold">1Φ16, Positio</text>
<text x="1131.2" y="71.8" font-size="5.6" fill="#222" text-anchor="middle" font-weight="bold">Concrete: C3</text>
<text x="1131.2" y="77.95" font-size="5.6" fill="#222" text-anchor="middle" font-weight="bold">Reinforcemer</text>
<text x="1131.2" y="84.1" font-size="5.6" fill="#222" text-anchor="middle" font-weight="bold">2Φ16, elevati</text>
<text x="1131.2" y="90.25" font-size="5.6" fill="#222" text-anchor="middle" font-weight="bold">1Φ16, Positio</text>
<text x="1131.2" y="96.4" font-size="5.6" fill="#222" text-anchor="middle" font-weight="bold">1Φ16, Positio</text>
<text x="1053.45" y="109.0" font-size="11.8" fill="#333" text-anchor="middle" textLength="35.12" lengthAdjust="spacingAndGlyphs">Stirrup</text>
<text x="1053.60" y="120.5" font-size="11.8" fill="#333" text-anchor="middle" textLength="59.02" lengthAdjust="spacingAndGlyphs">description</text>
<text x="1131.05" y="109.0" font-size="11.8" fill="#333" text-anchor="middle" textLength="78.52" lengthAdjust="spacingAndGlyphs">Reinforcement</text>
<text x="1131.75" y="120.5" font-size="11.8" fill="#333" text-anchor="middle" textLength="59.32" lengthAdjust="spacingAndGlyphs">description</text>
<path d="M1207.8 66 H1225.5 L1231.5 72 V95.5 Q1231.5 96.5 1230.5 96.5 H1208.8 Q1207.8 96.5 1207.8 95.5 Z" fill="#fff" stroke="#333" stroke-width="1.1"/><path d="M1224.5 66.5 V72.5 H1230.8" fill="#e8e8e8" stroke="#9a9a9a" stroke-width="1"/>
<path d="M1210.2 77.5 H1229.3 M1210.2 84.5 H1229.3 M1210.2 91.5 H1229.3" stroke="#3a3a3a" stroke-width="0.8"/><path d="M1210.2 80.7 H1229.3 M1210.2 87.7 H1229.3" stroke="#a8a8a8" stroke-width="0.8"/>
<rect x="1204.2" y="67.2" width="17.7" height="8.2" rx="2" fill="#f27a22"/>
<text x="1213" y="74.3" font-size="7.6" fill="#000" text-anchor="middle" font-weight="bold">XLS</text>
<path d="M1219.8 79.4 H1228.2 V76.3 L1236 81.3 L1228.2 86.3 V83.2 H1219.8 Z" fill="#f39a5a" stroke="#e87020" stroke-width="0.5"/>
<text x="1220.60" y="108.5" font-size="12" fill="#3c3c3c" text-anchor="middle" textLength="34.24" lengthAdjust="spacingAndGlyphs">Export</text>
<text x="7.58" y="173.7" font-size="12" fill="#000" textLength="53.14" lengthAdjust="spacingAndGlyphs">Navigator</text>
<path d="M196.5 168.5 H204.5 L200.5 173 Z" fill="#000"/>
<path d="M217.6 172.3 V168.2 Q217.8 166.6 219.5 166.6 Q221.3 166.6 221.4 168.2 V172.3" fill="none" stroke="#000" stroke-width="1.3"/><path d="M216 172.6 H223 M219.5 172.6 V176.2" stroke="#000" stroke-width="1.2"/>
<path d="M13 202 L20 202 L20 194.7 Z" fill="#404040"/>
<text x="30.5" y="202" font-size="12.4" fill="#000" textLength="36.6" lengthAdjust="spacingAndGlyphs">Project</text>
<path d="M35.5 221.5 H45.5" stroke="#c8c8c8" stroke-width="1"/>
<text x="50.3" y="226" font-size="11.4" fill="#000" textLength="62.0" lengthAdjust="spacingAndGlyphs">Project Data</text>
<path d="M35.5 243.5 H45.5" stroke="#c8c8c8" stroke-width="1"/>
<text x="50.3" y="248" font-size="11.4" fill="#000" textLength="74.6" lengthAdjust="spacingAndGlyphs">Cross-Sections</text>
<path d="M35.5 265.5 H45.5" stroke="#c8c8c8" stroke-width="1"/>
<text x="50.3" y="270" font-size="11.4" fill="#000" textLength="46.6" lengthAdjust="spacingAndGlyphs">Materials</text>
<path d="M35.5 209 V265.5" stroke="#c8c8c8" stroke-width="1"/>
<path d="M13 292 L20 292 L20 284.7 Z" fill="#404040"/>
<text x="30.5" y="292" font-size="12.4" fill="#000" textLength="51.4" lengthAdjust="spacingAndGlyphs">Geometry</text>
<path d="M35.5 311.5 H45.5" stroke="#c8c8c8" stroke-width="1"/>
<text x="50.3" y="316" font-size="11.4" fill="#000" textLength="46.6" lengthAdjust="spacingAndGlyphs">Members</text>
<path d="M35.5 333.5 H45.5" stroke="#c8c8c8" stroke-width="1"/>
<text x="50.3" y="338" font-size="11.4" fill="#000" textLength="46.6" lengthAdjust="spacingAndGlyphs">Supports</text>
<path d="M35.5 299 V333.5" stroke="#c8c8c8" stroke-width="1"/>
<path d="M13 360 L20 360 L20 352.7 Z" fill="#404040"/>
<text x="30.5" y="360" font-size="12.4" fill="#000" textLength="31.3" lengthAdjust="spacingAndGlyphs">Loads</text>
<path d="M35.5 379.5 H45.5" stroke="#c8c8c8" stroke-width="1"/>
<text x="50.3" y="384" font-size="11.4" fill="#000" textLength="57.0" lengthAdjust="spacingAndGlyphs">Load Cases</text>
<path d="M35.5 401.5 H45.5" stroke="#c8c8c8" stroke-width="1"/>
<text x="50.3" y="406" font-size="11.4" fill="#000" textLength="62.9" lengthAdjust="spacingAndGlyphs">Point Forces</text>
<path d="M35.5 423.5 H45.5" stroke="#c8c8c8" stroke-width="1"/>
<text x="50.3" y="428" font-size="11.4" fill="#000" textLength="77.8" lengthAdjust="spacingAndGlyphs">Point Moments</text>
<path d="M35.5 445.5 H45.5" stroke="#c8c8c8" stroke-width="1"/>
<text x="50.3" y="450" font-size="11.4" fill="#000" textLength="74.89999999999999" lengthAdjust="spacingAndGlyphs">Uniform Loads</text>
<path d="M35.5 467.5 H45.5" stroke="#c8c8c8" stroke-width="1"/>
<text x="50.3" y="472" font-size="11.4" fill="#000" textLength="53.9" lengthAdjust="spacingAndGlyphs">Line Loads</text>
<path d="M35.5 489.5 H45.5" stroke="#c8c8c8" stroke-width="1"/>
<text x="50.3" y="494" font-size="11.4" fill="#000" textLength="55.1" lengthAdjust="spacingAndGlyphs">Settlement</text>
<path d="M35.5 511.5 H45.5" stroke="#c8c8c8" stroke-width="1"/>
<text x="50.3" y="516" font-size="11.4" fill="#000" textLength="103.69999999999999" lengthAdjust="spacingAndGlyphs">User-Defined Forces</text>
<path d="M35.5 533.5 H45.5" stroke="#c8c8c8" stroke-width="1"/>
<text x="50.3" y="538" font-size="11.4" fill="#000" textLength="70.6" lengthAdjust="spacingAndGlyphs">Combinations</text>
<path d="M35.5 367 V533.5" stroke="#c8c8c8" stroke-width="1"/>
<path d="M13 560 L20 560 L20 552.7 Z" fill="#404040"/>
<text x="30.5" y="560" font-size="12.4" fill="#000" textLength="36.9" lengthAdjust="spacingAndGlyphs">Results</text>
<path d="M35.5 579.5 H45.5" stroke="#c8c8c8" stroke-width="1"/>
<text x="50.3" y="584" font-size="11.4" fill="#000" textLength="50.1" lengthAdjust="spacingAndGlyphs">Reactions</text>
<path d="M35.5 601.5 H45.5" stroke="#c8c8c8" stroke-width="1"/>
<text x="50.3" y="606" font-size="11.4" fill="#000" textLength="70.1" lengthAdjust="spacingAndGlyphs">Deformations</text>
<path d="M35.5 623.5 H45.5" stroke="#c8c8c8" stroke-width="1"/>
<text x="50.3" y="628" font-size="11.4" fill="#000" textLength="76.1" lengthAdjust="spacingAndGlyphs">Internal Forces</text>
<path d="M35.5 567 V623.5" stroke="#c8c8c8" stroke-width="1"/>
<path d="M13 650 L20 650 L20 642.7 Z" fill="#404040"/>
<text x="30.5" y="650" font-size="12.4" fill="#000" textLength="103.89999999999999" lengthAdjust="spacingAndGlyphs">Concrete Design 1D</text>
<path d="M35.5 669.5 H45.5" stroke="#c8c8c8" stroke-width="1"/>
<text x="50.3" y="674" font-size="11.4" fill="#000" textLength="23.6" lengthAdjust="spacingAndGlyphs">Data</text>
<path d="M35.5 691.5 H45.5" stroke="#c8c8c8" stroke-width="1"/>
<text x="50.3" y="696" font-size="11.4" fill="#000" textLength="75.0" lengthAdjust="spacingAndGlyphs">Reinforcement</text>
<path d="M35.5 713.5 H45.5" stroke="#c8c8c8" stroke-width="1"/>
<text x="50.3" y="718" font-size="11.4" fill="#000" textLength="52.6" lengthAdjust="spacingAndGlyphs">Deflection</text>
<path d="M35.5 735.5 H45.5" stroke="#c8c8c8" stroke-width="1"/>
<text x="50.3" y="740" font-size="11.4" fill="#000" textLength="149.79999999999998" lengthAdjust="spacingAndGlyphs">Redistribution and reduction</text>
<path d="M35.5 757.5 H45.5" stroke="#c8c8c8" stroke-width="1"/>
<text x="50.3" y="762" font-size="11.4" fill="#000" textLength="77.19999999999999" lengthAdjust="spacingAndGlyphs">Lateral stability</text>
<path d="M35.5 779.5 H45.5" stroke="#c8c8c8" stroke-width="1"/>
<text x="50.3" y="784" font-size="11.4" fill="#000" textLength="36.9" lengthAdjust="spacingAndGlyphs">Results</text>
<path d="M35.5 657 V779.5" stroke="#c8c8c8" stroke-width="1"/>
<path d="M13 806 L20 806 L20 798.7 Z" fill="#404040"/>
<text x="30.5" y="806" font-size="12.4" fill="#000" textLength="35.4" lengthAdjust="spacingAndGlyphs">Report</text>
<path d="M35.5 825.5 H45.5" stroke="#c8c8c8" stroke-width="1"/>
<text x="50.3" y="830" font-size="11.4" fill="#000" textLength="47.0" lengthAdjust="spacingAndGlyphs">Standard</text>
<path d="M35.5 847.5 H45.5" stroke="#c8c8c8" stroke-width="1"/>
<text x="50.3" y="852" font-size="11.4" fill="#000" textLength="42.800000000000004" lengthAdjust="spacingAndGlyphs">Detailed</text>
<path d="M35.5 813 V847.5" stroke="#c8c8c8" stroke-width="1"/>
<text x="240.88" y="173.7" font-size="12" fill="#000" textLength="27.34" lengthAdjust="spacingAndGlyphs">Main</text>
<g stroke="#6e6e6e" stroke-width="1.1" fill="none"><path d="M249.5 193 L253 196.5 M263 193 L259.5 196.5 M249.5 206.8 L253 203.3 M263 206.8 L259.5 203.3"/></g><path d="M248.8 192.4 L252.3 192.6 L249 195.9 Z M263.7 192.4 L260.2 192.6 L263.5 195.9 Z M248.8 207.4 L252.3 207.2 L249 203.9 Z M263.7 207.4 L260.2 207.2 L263.5 203.9 Z" fill="#6e6e6e"/>
<text x="1010.25" y="223.6" font-size="18" fill="#000" text-anchor="middle" textLength="33.26" lengthAdjust="spacingAndGlyphs">A-A</text>
<path d="M960 242 H1060.5 V282.3 H1032.5 V375.5 H987.5 V282.3 H960 Z" fill="#efefef" stroke="#2a2a2a" stroke-width="1.2"/>
<rect x="967.8" y="250" width="85.2" height="25" rx="5" fill="none" stroke="#6e6e6e" stroke-width="2.3"/>
<rect x="995.5" y="250" width="30" height="118.5" rx="5" fill="none" stroke="#6e6e6e" stroke-width="2.3"/>
<circle cx="973.5" cy="252.5" r="0.9" fill="#8a0000"/>
<circle cx="1001.3" cy="252.5" r="0.9" fill="#8a0000"/>
<circle cx="1019.2" cy="252.5" r="0.9" fill="#8a0000"/>
<circle cx="1046.8" cy="252.5" r="0.9" fill="#8a0000"/>
<circle cx="973.5" cy="272.5" r="0.9" fill="#8a0000"/>
<circle cx="1046.8" cy="272.5" r="0.9" fill="#8a0000"/>
<circle cx="1001.3" cy="364" r="2.6" fill="#8a0000"/>
<circle cx="1019.2" cy="364" r="2.6" fill="#8a0000"/>
<rect x="343" y="402" width="131" height="132" fill="#7b9cff" stroke="#0a28ff" stroke-width="4"/>
<rect x="478" y="402" width="1064" height="132" fill="#96ffae" stroke="#00ff1e" stroke-width="4"/>
<rect x="1546" y="402" width="132" height="132" fill="#7b9cff" stroke="#0a28ff" stroke-width="4"/>
<path d="M345 441.6 H472" stroke="#101060" stroke-width="1.1"/>
<path d="M1548 441.6 H1676" stroke="#101060" stroke-width="1.1"/>
<path d="M345 455.7 H472 M1548 455.7 H1676" stroke="#a070c0" stroke-width="1"/>
<path d="M480 455.7 H1540" stroke="#c09870" stroke-width="1"/>
<path d="M965.8 409 V526" stroke="#a85a10" stroke-width="2.6" stroke-linecap="round"/>
<path d="M1010.2 409 V526" stroke="#a85a10" stroke-width="2.6" stroke-linecap="round"/>
<path d="M1054.6 409 V526" stroke="#a85a10" stroke-width="2.6" stroke-linecap="round"/>
<path d="M480 441.6 H1540" stroke="#004a12" stroke-width="1.2"/>
<text x="409.00" y="498.4" font-size="23.2" fill="#000" text-anchor="middle" textLength="111.98" lengthAdjust="spacingAndGlyphs">Subzone 1</text>
<text x="692.95" y="496.0" font-size="23.2" fill="#000" text-anchor="middle" textLength="112.48" lengthAdjust="spacingAndGlyphs">Subzone 2</text>
<text x="1614.15" y="503.4" font-size="23.2" fill="#000" text-anchor="middle" textLength="111.68" lengthAdjust="spacingAndGlyphs">Subzone 3</text>
<circle cx="342.6" cy="535" r="6.6" fill="none" stroke="#108010" stroke-width="1.1"/>
<path d="M342.6 541.5 V548.4 M335.5 548.4 H350" stroke="#2030ff" stroke-width="1.1"/>
<path d="M328.8 535 H342 M328.8 528 V542" stroke="#ff3030" stroke-width="1.1"/>
<circle cx="1678" cy="535" r="6.6" fill="none" stroke="#108010" stroke-width="1.1"/>
<path d="M1678 541.5 V548.4 M1671 548.4 H1685.5" stroke="#2030ff" stroke-width="1.1"/>
<path d="M342.5 565.8 V582.6 M1677.5 565.8 V582.6 M342.5 571.5 H1677.5 M342.5 594 V644.2 M1677.5 594 V644.2 M342.5 638.2 H1677.5" stroke="#7a7a7a" stroke-width="1"/>
<path d="M342.8 571.5 L356 568.8 L356 574.2 Z M1677.2 571.5 L1664 568.8 L1664 574.2 Z" fill="#000"/>
<path d="M339 642.3 L346.5 635 M1674 642.3 L1681.5 635" stroke="#000" stroke-width="1.3"/>
<text x="1010.20" y="569.0" font-size="11" fill="#000" text-anchor="middle" textLength="19.72" lengthAdjust="spacingAndGlyphs">A-A</text>
<text x="1009.95" y="634.0" font-size="11" fill="#000" text-anchor="middle" textLength="22.82" lengthAdjust="spacingAndGlyphs">6.00</text>
<text x="342.5" y="667" font-size="14" fill="#1a1aff" text-anchor="middle">1</text>
<text x="1677.5" y="667" font-size="14" fill="#1a1aff" text-anchor="middle">2</text>
<text x="1723.03" y="410.9" font-size="11.2" fill="#000" textLength="108.04" lengthAdjust="spacingAndGlyphs">A-A: ø10mm á 0.20m</text>
<text x="1900.40" y="714.0" font-size="11.6" fill="#000" text-anchor="end" textLength="96.09" lengthAdjust="spacingAndGlyphs">X = 0.78  Z = -0.06</text>
<path d="M251.1 716.7 V688" stroke="#7070ff" stroke-width="1.6"/><path d="M247.8 700.5 L251.1 687.5 L254.4 700.5" fill="none" stroke="#2a2aff" stroke-width="1.3"/>
<path d="M251.1 716.7 H280.5" stroke="#ff7070" stroke-width="1.6"/><path d="M267.5 713.4 L280.8 716.7 L267.5 720" fill="none" stroke="#ff2020" stroke-width="1.3"/>
<text x="256" y="689" font-size="11.8" fill="#1a1aff">Z</text>
<text x="280.9" y="712.9" font-size="11.8" fill="#ff2020">X</text>
<text x="240.98" y="751.6" font-size="12" fill="#000" textLength="24.04" lengthAdjust="spacingAndGlyphs">Data</text>
<text x="246.54" y="781.9" font-size="12.7" fill="#f06a1e" font-weight="bold" textLength="129.92" lengthAdjust="spacingAndGlyphs">Reinforcement zones</text>
<path d="M835.5 773.5 H842.5 L839 770 Z M835.5 1010 H842.5 L839 1013.5 Z" fill="#6a6a6a"/>
<text x="271.33" y="809.3" font-size="11.2" fill="#fff" textLength="84.34" lengthAdjust="spacingAndGlyphs">Reference point</text>
<text x="362.50" y="809.3" font-size="11.6" fill="#fff" textLength="52.69" lengthAdjust="spacingAndGlyphs">Begin [m]</text>
<text x="442.60" y="809.3" font-size="11.6" fill="#fff" textLength="42.59" lengthAdjust="spacingAndGlyphs">End [m]</text>
<text x="522.70" y="809.3" font-size="11.6" fill="#fff" textLength="78.89" lengthAdjust="spacingAndGlyphs">Reinforcement</text>
<text x="692.60" y="809.3" font-size="11.6" fill="#fff" textLength="34.09" lengthAdjust="spacingAndGlyphs">Check</text>
<text x="733.30" y="809.3" font-size="11.6" fill="#fff" textLength="43.29" lengthAdjust="spacingAndGlyphs">Division</text>
<path d="M251.5 827.5 L258.2 831 L251.5 834.5" fill="none" stroke="#808080" stroke-width="1.3"/>
<text x="276.5" y="835.6" font-size="12" fill="#000">1</text>
<path d="M342 829.5 H347.5 L344.75 832.5 Z" fill="#000"/>
<text x="362.50" y="835.0" font-size="11.6" fill="#000" textLength="22.09" lengthAdjust="spacingAndGlyphs">0.00</text>
<text x="442.60" y="835.0" font-size="11.6" fill="#000" textLength="22.19" lengthAdjust="spacingAndGlyphs">6.00</text>
<text x="526.48" y="836.0" font-size="12" fill="#000" textLength="21.74" lengthAdjust="spacingAndGlyphs">A-A</text>
<path d="M612 829.5 H617.5 L614.75 832.5 Z" fill="#000"/>
<g stroke="#e03030" stroke-width="1.3" fill="none"><path d="M628.5 826.5 h3 M634.5 826.5 h3 M628.5 836 h3 M634.5 836 h3 M628.5 826.5 v3 M628.5 833 v3 M637.5 826.5 v3 M637.5 833 v3"/></g>
<g stroke="#e03030" stroke-width="1.3" fill="none"><path d="M648.5 826.5 h3 M654.5 826.5 h3 M648.5 836 h3 M654.5 836 h3 M648.5 826.5 v3 M648.5 833 v3 M657.5 826.5 v3 M657.5 833 v3"/></g>
<path d="M649 829 Q653 824 657.5 828.5 M650 833 Q654 836 657 832" stroke="#20a040" stroke-width="1.6" fill="none"/>
<path d="M667.5 837.5 L678.5 825" stroke="#2a5aa8" stroke-width="2"/><path d="M666.5 838.5 L668 835.5 L669.5 837 Z" fill="#333"/>
<path d="M696.2 830.5 L699 834 L704.5 826.5" fill="none" stroke="#000" stroke-width="1.5"/>
<text x="735" y="835.6" font-size="12" fill="#000">1</text>
<path d="M794 824.5 V837.5 M787.5 831 H800.5" stroke="#4a8ad8" stroke-width="3.2"/>
<path d="M809.5 825 L820 836.5 M820 825 L809.5 836.5" stroke="#e82828" stroke-width="3"/>
<text x="1295.88" y="751.8" font-size="12" fill="#000" textLength="35.64" lengthAdjust="spacingAndGlyphs">Details</text>
<text x="1303.90" y="781.8" font-size="11.6" fill="#000" textLength="72.19" lengthAdjust="spacingAndGlyphs">Cross-section</text>
<text x="1387.64" y="781.8" font-size="11" fill="#000" textLength="37.62" lengthAdjust="spacingAndGlyphs">Results</text>
<g stroke="#6e6e6e" stroke-width="1.1" fill="none"><path d="M1305.5 796 L1309 799.5 M1319 796 L1315.5 799.5 M1305.5 809.8 L1309 806.3 M1319 809.8 L1315.5 806.3"/></g><path d="M1304.8 795.4 L1308.3 795.6 L1305 798.9 Z M1319.7 795.4 L1316.2 795.6 L1319.5 798.9 Z M1304.8 810.4 L1308.3 810.2 L1305 806.9 Z M1319.7 810.4 L1316.2 810.2 L1319.5 806.9 Z" fill="#6e6e6e"/>
<text x="1481.65" y="811.7" font-size="18" fill="#000" text-anchor="middle" textLength="33.46" lengthAdjust="spacingAndGlyphs">A-A</text>
<path d="M1431.5 843.3 H1530.7 V883 H1503.4 V975.6 H1459.3 V883 H1431.5 Z" fill="#efefef" stroke="#3a3a3a" stroke-width="1.1"/>
<rect x="1438.5" y="850.5" width="86" height="25.6" rx="5" fill="none" stroke="#6e6e6e" stroke-width="2.2"/>
<rect x="1466.5" y="850.5" width="29.5" height="118" rx="5" fill="none" stroke="#6e6e6e" stroke-width="2.2"/>
<circle cx="1445" cy="853.5" r="0.9" fill="#8a0000"/>
<circle cx="1472" cy="853.5" r="0.9" fill="#8a0000"/>
<circle cx="1490" cy="853.5" r="0.9" fill="#8a0000"/>
<circle cx="1517.7" cy="853.5" r="0.9" fill="#8a0000"/>
<circle cx="1445" cy="872.8" r="0.9" fill="#8a0000"/>
<circle cx="1517.7" cy="872.8" r="0.9" fill="#8a0000"/>
<circle cx="1472.2" cy="964.4" r="2.6" fill="#8a0000"/>
<circle cx="1489.9" cy="964.4" r="2.6" fill="#8a0000"/>
<path d="M1481.2 975 V840" stroke="#333" stroke-width="1" stroke-dasharray="7 2.5 1.5 2.5"/>
<path d="M1481.2 831 L1479 840.5 L1483.4 840.5 Z" fill="#000"/>
<text x="1481.5" y="828" font-size="9" fill="#000" text-anchor="middle">z</text>
<path d="M1421 897.3 H1538" stroke="#333" stroke-width="1" stroke-dasharray="7 2.5 1.5 2.5"/>
<path d="M1545 897.3 L1535.5 895.1 L1535.5 899.5 Z" fill="#000"/>
<text x="1545.5" y="899" font-size="9" fill="#000">y</text>
<path d="M1383.4 843.2 V976 M1402 843.2 V976 M1420.7 843.2 V976" stroke="#555" stroke-width="1"/>
<path d="M1378 843.2 H1431.5 M1378 975.8 H1431" stroke="#555" stroke-width="1" stroke-dasharray="12 6.5"/>
<path d="M1402 882.9 H1411.7 M1420.7 897.3 H1427" stroke="#555" stroke-width="1"/>
<path d="M1379.1000000000001 840.4000000000001 L1387.7 846.0" stroke="#111" stroke-width="1.2"/>
<path d="M1397.7 840.4000000000001 L1406.3 846.0" stroke="#111" stroke-width="1.2"/>
<path d="M1416.4 840.4000000000001 L1425.0 846.0" stroke="#111" stroke-width="1.2"/>
<path d="M1379.1000000000001 973.2 L1387.7 978.8" stroke="#111" stroke-width="1.2"/>
<path d="M1397.7 973.2 L1406.3 978.8" stroke="#111" stroke-width="1.2"/>
<path d="M1416.4 973.2 L1425.0 978.8" stroke="#111" stroke-width="1.2"/>
<path d="M1397.7 880.1 L1406.3 885.6999999999999" stroke="#111" stroke-width="1.2"/>
<path d="M1416.4 894.5 L1425.0 900.0999999999999" stroke="#111" stroke-width="1.2"/>
<text x="0" y="0" font-size="9" fill="#333" text-anchor="middle" transform="translate(1379.4 909.4) rotate(-90)">600</text>
<text x="0" y="0" font-size="9" fill="#333" text-anchor="middle" transform="translate(1397.8 862.7) rotate(-90)">180</text>
<text x="0" y="0" font-size="9" fill="#333" text-anchor="middle" transform="translate(1397.8 929.6) rotate(-90)">420</text>
<text x="0" y="0" font-size="9" fill="#333" text-anchor="middle" transform="translate(1416.8 870.2) rotate(-90)">243</text>
<text x="0" y="0" font-size="9" fill="#333" text-anchor="middle" transform="translate(1416.8 936.6) rotate(-90)">357</text>
<path d="M1431.3 977 V991.8 M1459.2 976 V991.8 M1503.3 976 V991.8 M1530.6 977 V991.8 M1431.3 996 V1010.4 M1530.6 996 V1010.4" stroke="#555" stroke-width="1"/>
<path d="M1431.3 986.4 H1530.6 M1431.3 1005.6 H1530.6" stroke="#111" stroke-width="1"/>
<path d="M1428.0 989.6999999999999 L1434.6 983.1" stroke="#111" stroke-width="1.2"/>
<path d="M1455.9 989.6999999999999 L1462.5 983.1" stroke="#111" stroke-width="1.2"/>
<path d="M1500.0 989.6999999999999 L1506.6 983.1" stroke="#111" stroke-width="1.2"/>
<path d="M1527.3 989.6999999999999 L1533.8999999999999 983.1" stroke="#111" stroke-width="1.2"/>
<path d="M1428.0 1008.9 L1434.6 1002.3000000000001" stroke="#111" stroke-width="1.2"/>
<path d="M1527.3 1008.9 L1533.8999999999999 1002.3000000000001" stroke="#111" stroke-width="1.2"/>
<text x="1445.2" y="982.8" font-size="9" fill="#333" text-anchor="middle">125</text>
<text x="1481.4" y="982.8" font-size="9" fill="#333" text-anchor="middle">200</text>
<text x="1517.1" y="982.8" font-size="9" fill="#333" text-anchor="middle">125</text>
<text x="1481.2" y="1000.5" font-size="9" fill="#333" text-anchor="middle">450</text>
<text x="1559.51" y="855.8" font-size="13.1" fill="#000" textLength="90.47" lengthAdjust="spacingAndGlyphs">Reinforcement:</text>
<text x="1559.51" y="870.8" font-size="13.1" fill="#000" textLength="224.57" lengthAdjust="spacingAndGlyphs">4ø10 (314mm²) (B 500B), z = 198 mm</text>
<text x="1559.51" y="885.8" font-size="13.1" fill="#000" textLength="224.57" lengthAdjust="spacingAndGlyphs">2ø10 (157mm²) (B 500B), z = 108 mm</text>
<text x="1559.51" y="900.8" font-size="13.1" fill="#000" textLength="229.27" lengthAdjust="spacingAndGlyphs">2ø25 (982mm²) (B 500B), z = -305 mm</text>
<text x="1559.51" y="915.8" font-size="13.1" fill="#000" textLength="49.87" lengthAdjust="spacingAndGlyphs">Stirrups:</text>
<text x="1559.51" y="930.8" font-size="13.1" fill="#000" textLength="288.77" lengthAdjust="spacingAndGlyphs">ø10 (B 500B) - 200 mm, closed, for torsion check</text>
<text x="1559.51" y="945.8" font-size="13.1" fill="#000" textLength="139.27" lengthAdjust="spacingAndGlyphs">ø10 (B 500B) - 200 mm</text>
<path d="M1306.6 1010.4 V982" stroke="#7070ff" stroke-width="1.6"/><path d="M1303.3 995 L1306.6 981.5 L1309.9 995" fill="none" stroke="#2a2aff" stroke-width="1.3"/>
<path d="M1306.6 1010.4 H1336" stroke="#40b040" stroke-width="1.6"/><path d="M1323 1007.1 L1336.3 1010.4 L1323 1013.7" fill="none" stroke="#20a020" stroke-width="1.3"/>
<text x="1311.5" y="983.3" font-size="11.8" fill="#1a1aff">Z</text>
<text x="1336.4" y="1007.7" font-size="11.8" fill="#20a020">Y</text>
</svg>
</body></html>
